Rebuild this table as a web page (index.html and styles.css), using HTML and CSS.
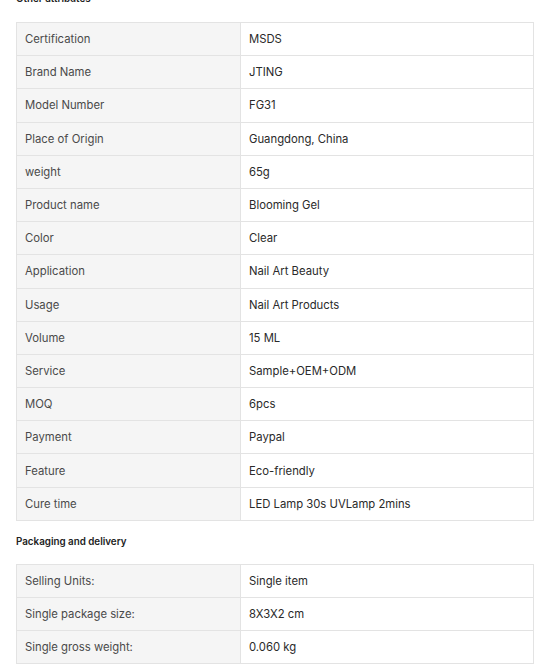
FILE: index.html
```html
<!DOCTYPE html>
<html>
<head>
<meta charset="utf-8">
<link rel="stylesheet" href="styles.css">
</head>
<body>
<div class="page">
  <div class="title title-first">Other attributes</div>
  <table class="attrs">
    <tr><td class="k">Certification</td><td class="v">MSDS</td></tr>
    <tr><td class="k">Brand Name</td><td class="v">JTING</td></tr>
    <tr><td class="k">Model Number</td><td class="v">FG31</td></tr>
    <tr><td class="k">Place of Origin</td><td class="v">Guangdong, China</td></tr>
    <tr><td class="k">weight</td><td class="v">65g</td></tr>
    <tr><td class="k">Product name</td><td class="v">Blooming Gel</td></tr>
    <tr><td class="k">Color</td><td class="v">Clear</td></tr>
    <tr><td class="k">Application</td><td class="v">Nail Art Beauty</td></tr>
    <tr><td class="k">Usage</td><td class="v">Nail Art Products</td></tr>
    <tr><td class="k">Volume</td><td class="v">15 ML</td></tr>
    <tr><td class="k">Service</td><td class="v">Sample+OEM+ODM</td></tr>
    <tr><td class="k">MOQ</td><td class="v">6pcs</td></tr>
    <tr><td class="k">Payment</td><td class="v">Paypal</td></tr>
    <tr><td class="k">Feature</td><td class="v">Eco-friendly</td></tr>
    <tr><td class="k">Cure time</td><td class="v">LED Lamp 30s UVLamp 2mins</td></tr>
  </table>
  <div class="title title-second">Packaging and delivery</div>
  <table class="attrs">
    <tr><td class="k">Selling Units:</td><td class="v">Single item</td></tr>
    <tr><td class="k">Single package size:</td><td class="v">8X3X2 cm</td></tr>
    <tr><td class="k">Single gross weight:</td><td class="v">0.060 kg</td></tr>
  </table>
</div>
</body>
</html>
```

FILE: styles.css
```css
html, body {
  margin: 0;
  padding: 0;
  background: #fff;
}
body {
  font-family: Inter, "Open Sans", Arial, sans-serif;
  color: #333;
  overflow: hidden;
}
.page {
  padding: 0 23px 0 16px;
}
.title {
  font-size: 9.8px;
  font-weight: 600;
  color: #222;
  line-height: 22px;
}
.title-first {
  margin-top: -12px;
  margin-bottom: 12px;
}
.title-second {
  margin-top: 10px;
  margin-bottom: 11px;
}
.attrs {
  width: 100%;
  border-collapse: collapse;
  table-layout: fixed;
}
.attrs td {
  border: 1px solid #e3e3e3;
  height: 33.2px;
  box-sizing: border-box;
  padding: 0 8px;
  font-size: 11.3px;
  line-height: 16px;
  vertical-align: middle;
}
.attrs td.k {
  width: 224px;
  background: #f5f5f5;
  color: #4a4a4a;
}
.attrs td.v {
  background: #fff;
  color: #2a2a2a;
}
```
